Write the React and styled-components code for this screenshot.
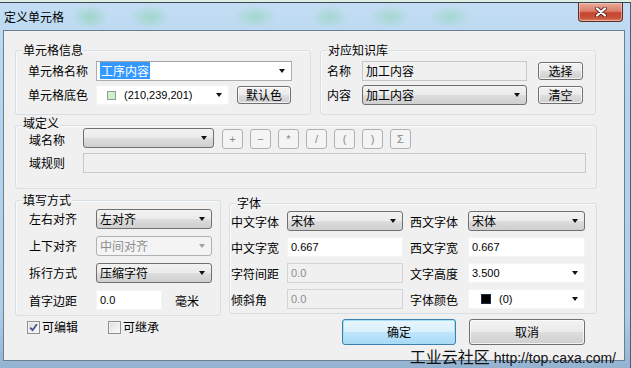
import React from 'react';
import styled, { createGlobalStyle, css } from 'styled-components';

const cjk = `"Noto Sans CJK SC", "Liberation Sans", sans-serif`;
const latin = `"Liberation Sans", "Noto Sans CJK SC", sans-serif`;

const GlobalStyle = createGlobalStyle`
  html, body { margin: 0; padding: 0; }
  body {
    background: #dcefe2;
    font-family: ${cjk};
    font-size: 12px;
    color: #000;
  }
`;

//Window frame
const Window = styled.div`
  position: relative;
  width: 631px;
  height: 366px;
  margin-top: 2px;
  box-sizing: border-box;
  border-top: 1px solid #3d4650;
  border-right: 1px solid #4d6070;
  display: flex;
  flex-direction: column;
  overflow: hidden;
  background: linear-gradient(180deg, #c2ddf3 0%, #b7d5f0 20%, #aecde9 85%, #93b3d1 100%);
`;

// blurred desktop content showing through the glass title bar
const TitleBar = styled.div`
  position: relative;
  height: 27px;
  flex: none;
  display: flex;
  align-items: flex-start;
  justify-content: space-between;
  padding-left: 4px;
  background:
    radial-gradient(ellipse 18px 12px at 90px 14px, rgba(130, 210, 160, 0.55), transparent),
    radial-gradient(ellipse 20px 12px at 150px 14px, rgba(130, 210, 160, 0.5), transparent),
    radial-gradient(ellipse 22px 12px at 255px 14px, rgba(130, 210, 160, 0.45), transparent),
    radial-gradient(ellipse 18px 12px at 330px 14px, rgba(130, 210, 160, 0.45), transparent),
    radial-gradient(ellipse 20px 12px at 390px 14px, rgba(130, 210, 160, 0.45), transparent),
    radial-gradient(ellipse 22px 12px at 450px 14px, rgba(130, 210, 160, 0.4), transparent);
`;

const Title = styled.div`
  padding-top: 7px;
  line-height: 14px;
  font-size: 12px;
`;

const CloseBtn = styled.div`
  width: 45px;
  height: 19px;
  margin-right: 7px;
  box-sizing: border-box;
  border: 1px solid #5e2a22;
  border-top: none;
  border-radius: 0 0 4px 4px;
  background: linear-gradient(180deg, #e9a99b 0%, #d9806c 45%, #c6442d 55%, #c9553c 85%, #d98b6e 100%);
  box-shadow: inset 0 0 0 1px rgba(255, 220, 210, 0.5);
  display: flex;
  align-items: center;
  justify-content: center;
`;

const Client = styled.div`
  position: relative;
  flex: 1;
  margin: 0 5px 7px 3px;
  border: 1px solid #6b7f92;
  background: #f0f0f0;
  padding: 19px 0 0 11px;
  display: flex;
  flex-direction: column;
`;

//Group boxes
const Group = styled.div`
  position: relative;
  box-sizing: border-box;
  border: 1px solid #d5dfe5;
  border-radius: 3px;
  box-shadow: inset 1px 1px 0 #fafafa;
  display: flex;
  flex-direction: column;
`;

const Caption = styled.span`
  position: absolute;
  top: ${p => p.$top || -8}px;
  left: 6px;
  padding: 0 1px;
  line-height: 14px;
  background: #f0f0f0;
`;

const TopRow = styled.div`
  display: grid;
  grid-template-columns: 296px 276px;
  column-gap: 9px;
`;

const InfoGroup = styled(Group)`
  height: 65px;
  padding: 10px 0 0 12px;
  gap: 4px;
`;

const KnowGroup = styled(Group)`
  height: 65px;
  padding: 10px 0 0 6px;
  gap: 4px;
`;

const DomainGroup = styled(Group)`
  width: 582px;
  height: 64px;
  margin-top: 10px;
  padding: 2px 0 0 13px;
  gap: 5px;
`;

const LowerRow = styled.div`
  display: grid;
  grid-template-columns: 206px 368px;
  column-gap: 8px;
  align-items: start;
  margin-top: 11px;
`;

const FillGroup = styled(Group)`
  height: 116px;
  padding: 8px 0 0 13px;
  gap: 7px;
`;

const FontGroup = styled(Group)`
  height: 111px;
  margin-top: 3px;
  padding: 7px 0 0 1px;
  gap: 6px;
`;

const Row = styled.div`
  display: flex;
  align-items: center;
  height: 20px;
`;

const Label = styled.span`
  flex: none;
  width: ${p => p.$w}px;
  padding-left: ${p => p.$pl || 0}px;
  padding-top: ${p => p.$pt || 0}px;
  box-sizing: border-box;
  line-height: 14px;
  white-space: nowrap;
`;

//Inputs
const looks = {
  button: css`
    border: 1px solid #707070;
    border-radius: 3px;
    background: linear-gradient(180deg, #f2f2f2 0%, #ebebeb 48%, #dddddd 52%, #cfcfcf 100%);
  `,
  disabled: css`
    border: 1px solid #adb2b5;
    border-radius: 3px;
    background: #f4f4f4;
    color: #8d8d8d;
  `,
  edit: css`
    border: 1px solid #abadb3;
    border-top-color: #9ea1a8;
    background: #fff;
  `,
  flat: css`
    border: 1px solid #f4f4f4;
    background: #fff;
  `,
  readonly: css`
    border: 1px solid #c5c8cc;
    background: #f0f0f0;
  `,
  off: css`
    border: 1px solid #d2d4d6;
    background: #f0f0f0;
    color: #8d8d8d;
  `,
};

const Box = styled.div`
  flex: none;
  width: ${p => p.$w}px;
  height: 20px;
  box-sizing: border-box;
  display: flex;
  align-items: center;
  padding-left: 3px;
  line-height: 14px;
  font-family: ${p => (p.$num ? latin : cjk)};
  font-size: ${p => (p.$num ? 11 : 12)}px;
  white-space: nowrap;
  ${p => looks[p.$look || 'edit']}
`;

const BoxText = styled.span`
  flex: 1;
`;

const Arrow = styled.span`
  flex: none;
  width: 0;
  height: 0;
  margin-right: 6px;
  border-left: 3.5px solid transparent;
  border-right: 3.5px solid transparent;
  border-top: 4px solid ${p => (p.$off ? '#a0a0a0' : '#111')};
`;

const Selected = styled.span`
  background: #3399ff;
  color: #fff;
  padding: 0 1px;
`;

const Swatch = styled.span`
  flex: none;
  width: ${p => p.$s}px;
  height: ${p => p.$s}px;
  box-sizing: border-box;
  margin: 0 8px 0 ${p => p.$ml}px;
  background: ${p => p.$c};
  border: 1px solid ${p => p.$b};
`;

const Btn = styled.div`
  flex: none;
  width: ${p => p.$w}px;
  height: ${p => p.$h}px;
  margin-left: ${p => p.$ml || 0}px;
  box-sizing: border-box;
  display: flex;
  align-items: center;
  justify-content: center;
  line-height: 14px;
  border: 1px solid #707070;
  border-radius: 3px;
  background: linear-gradient(180deg, #f2f2f2 0%, #ebebeb 48%, #dddddd 52%, #cfcfcf 100%);
  box-shadow: inset 0 0 0 1px rgba(255, 255, 255, 0.7);
  ${p => p.$primary && css`
    border-color: #3c7fb1;
    background: linear-gradient(180deg, #eaf6fd 0%, #d9f0fc 48%, #bee6fd 52%, #a7d9f5 100%);
    box-shadow: inset 0 0 0 1px #a6e0f8;
  `}
`;

const OpBtn = styled.div`
  flex: none;
  width: 21px;
  height: 20px;
  margin-left: 7px;
  box-sizing: border-box;
  display: flex;
  align-items: center;
  justify-content: center;
  border: 1px solid #adb2b5;
  border-radius: 3px;
  background: #f4f4f4;
  color: #888;
  font: 11px ${latin};
`;

const OpGroup = styled.div`
  display: flex;
  margin-left: 1px;
  margin-top: 2px;
`;

const Unit = styled.span`
  margin-left: 13px;
  line-height: 14px;
  padding-top: 2px;
`;

//Bottom
const BottomRow = styled.div`
  display: flex;
  align-items: flex-start;
  width: 570px;
  margin-top: 3px;
  padding-left: 12px;
  box-sizing: border-box;
`;

const CheckItem = styled.label`
  display: flex;
  align-items: center;
  width: 81px;
  margin-top: 1px;
  line-height: 14px;
`;

const CheckBox = styled.span`
  flex: none;
  width: 13px;
  height: 13px;
  box-sizing: border-box;
  margin-right: 2px;
  border: 1px solid #8e8f8f;
  background: linear-gradient(135deg, #dcdcdc 0%, #f0f0f0 60%, #fbfbfb 100%);
  box-shadow: inset 0 0 0 1px #f4f4f4;
  display: flex;
  align-items: center;
  justify-content: center;
`;

const Actions = styled.div`
  display: flex;
  gap: 13px;
  margin-left: auto;
`;

const Watermark = styled.div`
  position: absolute;
  right: 14px;
  bottom: 2px;
  font: 16px ${cjk};
  line-height: 18px;
  color: #111;
  white-space: nowrap;
`;

const Url = styled.span`
  font: 14px ${latin};
  margin-left: 4px;
`;

const Check = ({ checked, children }) => (
  <CheckItem>
    <CheckBox>
      {checked && (
        <svg width="9" height="9" viewBox="0 0 9 9">
          <path d="M1.2 4.6 L3.6 7.2 L7.9 1.2" fill="none" stroke="#3a5289" strokeWidth="1.7" />
        </svg>
      )}
    </CheckBox>
    {children}
  </CheckItem>
);

const ops = ['+', '−', '*', '/', '(', ')', 'Σ'];

export default function App() {
  return (
    <>
      <GlobalStyle />
      <Window>
        <TitleBar>
          <Title>定义单元格</Title>
          <CloseBtn>
            <svg width="12" height="10" viewBox="0 0 12 10">
              <path d="M2 1.5 L10 8.5 M10 1.5 L2 8.5" stroke="#5a2a25" strokeWidth="4" strokeLinecap="round" />
              <path d="M2 1.5 L10 8.5 M10 1.5 L2 8.5" stroke="#fff" strokeWidth="2.2" strokeLinecap="round" />
            </svg>
          </CloseBtn>
        </TitleBar>

        <Client>
          <TopRow>
            <InfoGroup>
              <Caption>单元格信息</Caption>
              <Row>
                <Label $w={68}>单元格名称</Label>
                <Box $w={196}>
                  <BoxText><Selected>工序内容</Selected></BoxText>
                  <Arrow />
                </Box>
              </Row>
              <Row>
                <Label $w={68}>单元格底色</Label>
                <Box $w={133} $look="flat" $num>
                  <Swatch $s={9} $ml={7} $c="rgb(210,239,201)" $b="#8aa0a8" />
                  <BoxText>(210,239,201)</BoxText>
                  <Arrow />
                </Box>
                <Btn $w={54} $h={18} $ml={8}>默认色</Btn>
              </Row>
            </InfoGroup>

            <KnowGroup>
              <Caption>对应知识库</Caption>
              <Row>
                <Label $w={35}>名称</Label>
                <Box $w={165} $look="readonly">
                  <BoxText>加工内容</BoxText>
                </Box>
                <Btn $w={45} $h={18} $ml={11}>选择</Btn>
              </Row>
              <Row>
                <Label $w={35}>内容</Label>
                <Box $w={165} $look="button">
                  <BoxText>加工内容</BoxText>
                  <Arrow />
                </Box>
                <Btn $w={45} $h={18} $ml={11}>清空</Btn>
              </Row>
            </KnowGroup>
          </TopRow>

          <DomainGroup>
            <Caption $top={-10}>域定义</Caption>
            <Row>
              <Label $w={54} $pt={3}>域名称</Label>
              <Box $w={131} $look="button">
                <BoxText />
                <Arrow />
              </Box>
              <OpGroup>
                {ops.map(o => <OpBtn key={o}>{o}</OpBtn>)}
              </OpGroup>
            </Row>
            <Row>
              <Label $w={54}>域规则</Label>
              <Box $w={503} $look="readonly" />
            </Row>
          </DomainGroup>

          <LowerRow>
            <FillGroup>
              <Caption>填写方式</Caption>
              <Row>
                <Label $w={67}>左右对齐</Label>
                <Box $w={116} $look="button"><BoxText>左对齐</BoxText><Arrow /></Box>
              </Row>
              <Row>
                <Label $w={67}>上下对齐</Label>
                <Box $w={116} $look="disabled"><BoxText>中间对齐</BoxText><Arrow $off /></Box>
              </Row>
              <Row>
                <Label $w={67}>拆行方式</Label>
                <Box $w={116} $look="button"><BoxText>压缩字符</BoxText><Arrow /></Box>
              </Row>
              <Row>
                <Label $w={67} $pt={2}>首字边距</Label>
                <Box $w={66} $look="flat" $num><BoxText>0.0</BoxText></Box>
                <Unit>毫米</Unit>
              </Row>
            </FillGroup>

            <FontGroup>
              <Caption>字体</Caption>
              <Row>
                <Label $w={56} $pt={2}>中文字体</Label>
                <Box $w={116} $look="button"><BoxText>宋体</BoxText><Arrow /></Box>
                <Label $w={65} $pl={7} $pt={2}>西文字体</Label>
                <Box $w={117} $look="button"><BoxText>宋体</BoxText><Arrow /></Box>
              </Row>
              <Row>
                <Label $w={56} $pt={2}>中文字宽</Label>
                <Box $w={116} $look="flat" $num><BoxText>0.667</BoxText></Box>
                <Label $w={65} $pl={7} $pt={2}>西文字宽</Label>
                <Box $w={117} $look="flat" $num><BoxText>0.667</BoxText></Box>
              </Row>
              <Row>
                <Label $w={56} $pt={2}>字符间距</Label>
                <Box $w={116} $look="off" $num><BoxText>0.0</BoxText></Box>
                <Label $w={65} $pl={7} $pt={2}>文字高度</Label>
                <Box $w={117} $look="flat" $num><BoxText>3.500</BoxText><Arrow /></Box>
              </Row>
              <Row>
                <Label $w={56} $pt={2}>倾斜角</Label>
                <Box $w={116} $look="off" $num><BoxText>0.0</BoxText></Box>
                <Label $w={65} $pl={7} $pt={2}>字体颜色</Label>
                <Box $w={117} $look="flat" $num>
                  <Swatch $s={10} $ml={9} $c="#000" $b="#1b2a44" />
                  <BoxText>(0)</BoxText>
                  <Arrow />
                </Box>
              </Row>
            </FontGroup>
          </LowerRow>

          <BottomRow>
            <Check checked>可编辑</Check>
            <Check>可继承</Check>
            <Actions>
              <Btn $w={114} $h={26} $primary>确定</Btn>
              <Btn $w={116} $h={26}>取消</Btn>
            </Actions>
          </BottomRow>
        </Client>

        <Watermark>工业云社区<Url>http://top.caxa.com/</Url></Watermark>
      </Window>
    </>
  );
}
